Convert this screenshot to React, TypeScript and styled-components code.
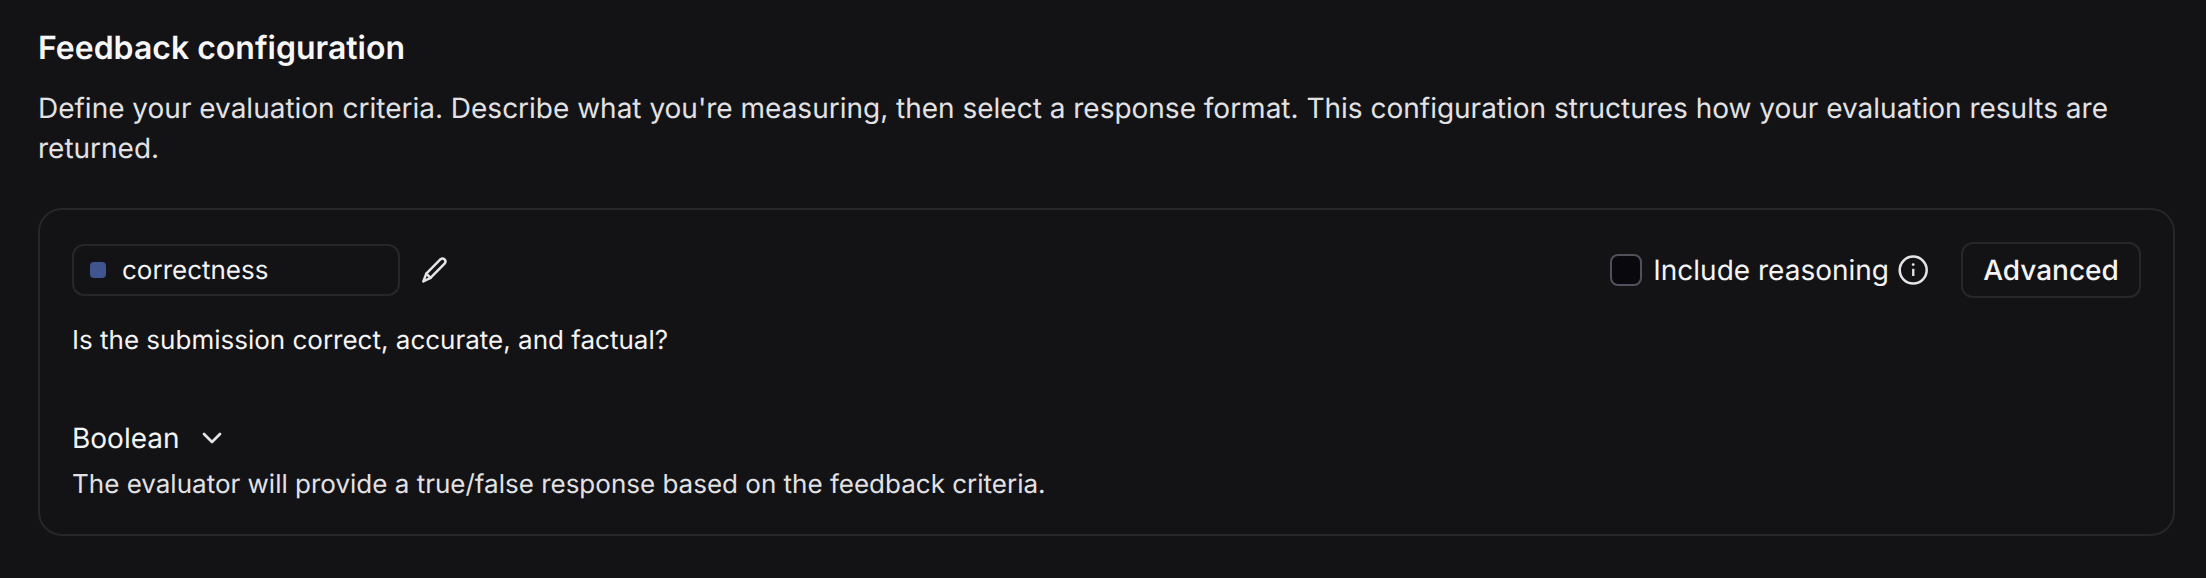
import React from 'react';
import styled, { createGlobalStyle } from 'styled-components';

const Global = createGlobalStyle`
  * { box-sizing: border-box; }
  body { margin: 0; background: #131316; color: #f4f4f5; font-family: Inter, sans-serif; text-rendering: geometricPrecision; }
`;
const Page = styled.main`height: 578px; padding: 26px 31px 0 38px; background: #131316;`;
const Title = styled.h1`margin: 0; font-size: 32px; line-height: 44px; font-weight: 600; color: #f7f7f8;`;
const Intro = styled.p`margin: 18px 0 0; font-size: 28px; line-height: 40px; letter-spacing: -0.007px; color: #e2e2e5;`;
const Card = styled.section`height: 328px; margin-top: 40px; padding: 32px; border: 2px solid #27272a; border-radius: 24px;`;
const Row = styled.div`display: flex; align-items: center; height: 56px;`;
const Key = styled.div`display: flex; align-items: center; gap: 16px; width: 328px; height: 52px; padding: 0 16px; border: 2px solid #27272a; border-radius: 12px; font-size: 26px; margin-right: 20px;`;
const Swatch = styled.span`width: 16px; height: 16px; border-radius: 4px; background: #405590;`;
const Spacer = styled.div`flex: 1;`;
const Check = styled.span`width: 32px; height: 32px; border: 2px solid #51515b; border-radius: 8px; background: #08080d; margin-right: 11px;`;
const Label = styled.span`font-size: 28px; margin-right: 8px;`;
const Button = styled.button`width: 180px; height: 56px; padding: 0; margin-left: 32px; border: 2px solid #27272a; border-radius: 12px; background: transparent; color: #f4f4f5; font: 500 28px Inter, sans-serif; text-rendering: inherit;`;
const Text = styled.p<{ $top: number; $muted?: boolean }>`margin: ${p => p.$top}px 0 0; font-size: 26px; line-height: 36px; color: ${p => p.$muted ? '#e2e2e5' : '#f4f4f5'};`;
const Select = styled.div`display: flex; align-items: center; gap: 16px; height: 40px; margin-top: 59px; font-size: 28px;`;
const Icon = styled.svg`flex: none; fill: none; stroke: #e4e4e7; stroke-linecap: round; stroke-linejoin: round;`;

export default function App() {
  return <><Global /><Page>
    <Title>Feedback configuration</Title>
    <Intro>Define your evaluation criteria. Describe what you're measuring, then select a response format. This configuration structures how your evaluation results are returned.</Intro>
    <Card>
      <Row>
        <Key><Swatch />correctness</Key>
        <Icon width="30" height="30" viewBox="0 0 30 30" strokeWidth="2.5"><path d="M6.3 18.6 20.6 4.2a3 3 0 0 1 4.2 4.2L10.5 22.8 3.3 26.5Z" /><path d="M6.3 18.6 10.5 22.8" /></Icon>
        <Spacer />
        <Check /><Label>Include reasoning</Label>
        <Icon width="32" height="32" viewBox="0 0 32 32" strokeWidth="2.5"><circle cx="16.2" cy="16.1" r="13.5" /><rect x="15.1" y="14.8" width="2.3" height="7.2" fill="#e4e4e7" stroke="none" /><circle cx="16.2" cy="10.6" r="1.4" fill="#e4e4e7" stroke="none" /></Icon>
        <Button>Advanced</Button>
      </Row>
      <Text $top={25}>Is the submission correct, accurate, and factual?</Text>
      <Select>Boolean<Icon width="32" height="32" viewBox="0 0 24 24" strokeWidth="2"><path d="m6 9 6 6 6-6" /></Icon></Select>
      <Text $top={9} $muted>The evaluator will provide a true/false response based on the feedback criteria.</Text>
    </Card>
  </Page></>;
}
